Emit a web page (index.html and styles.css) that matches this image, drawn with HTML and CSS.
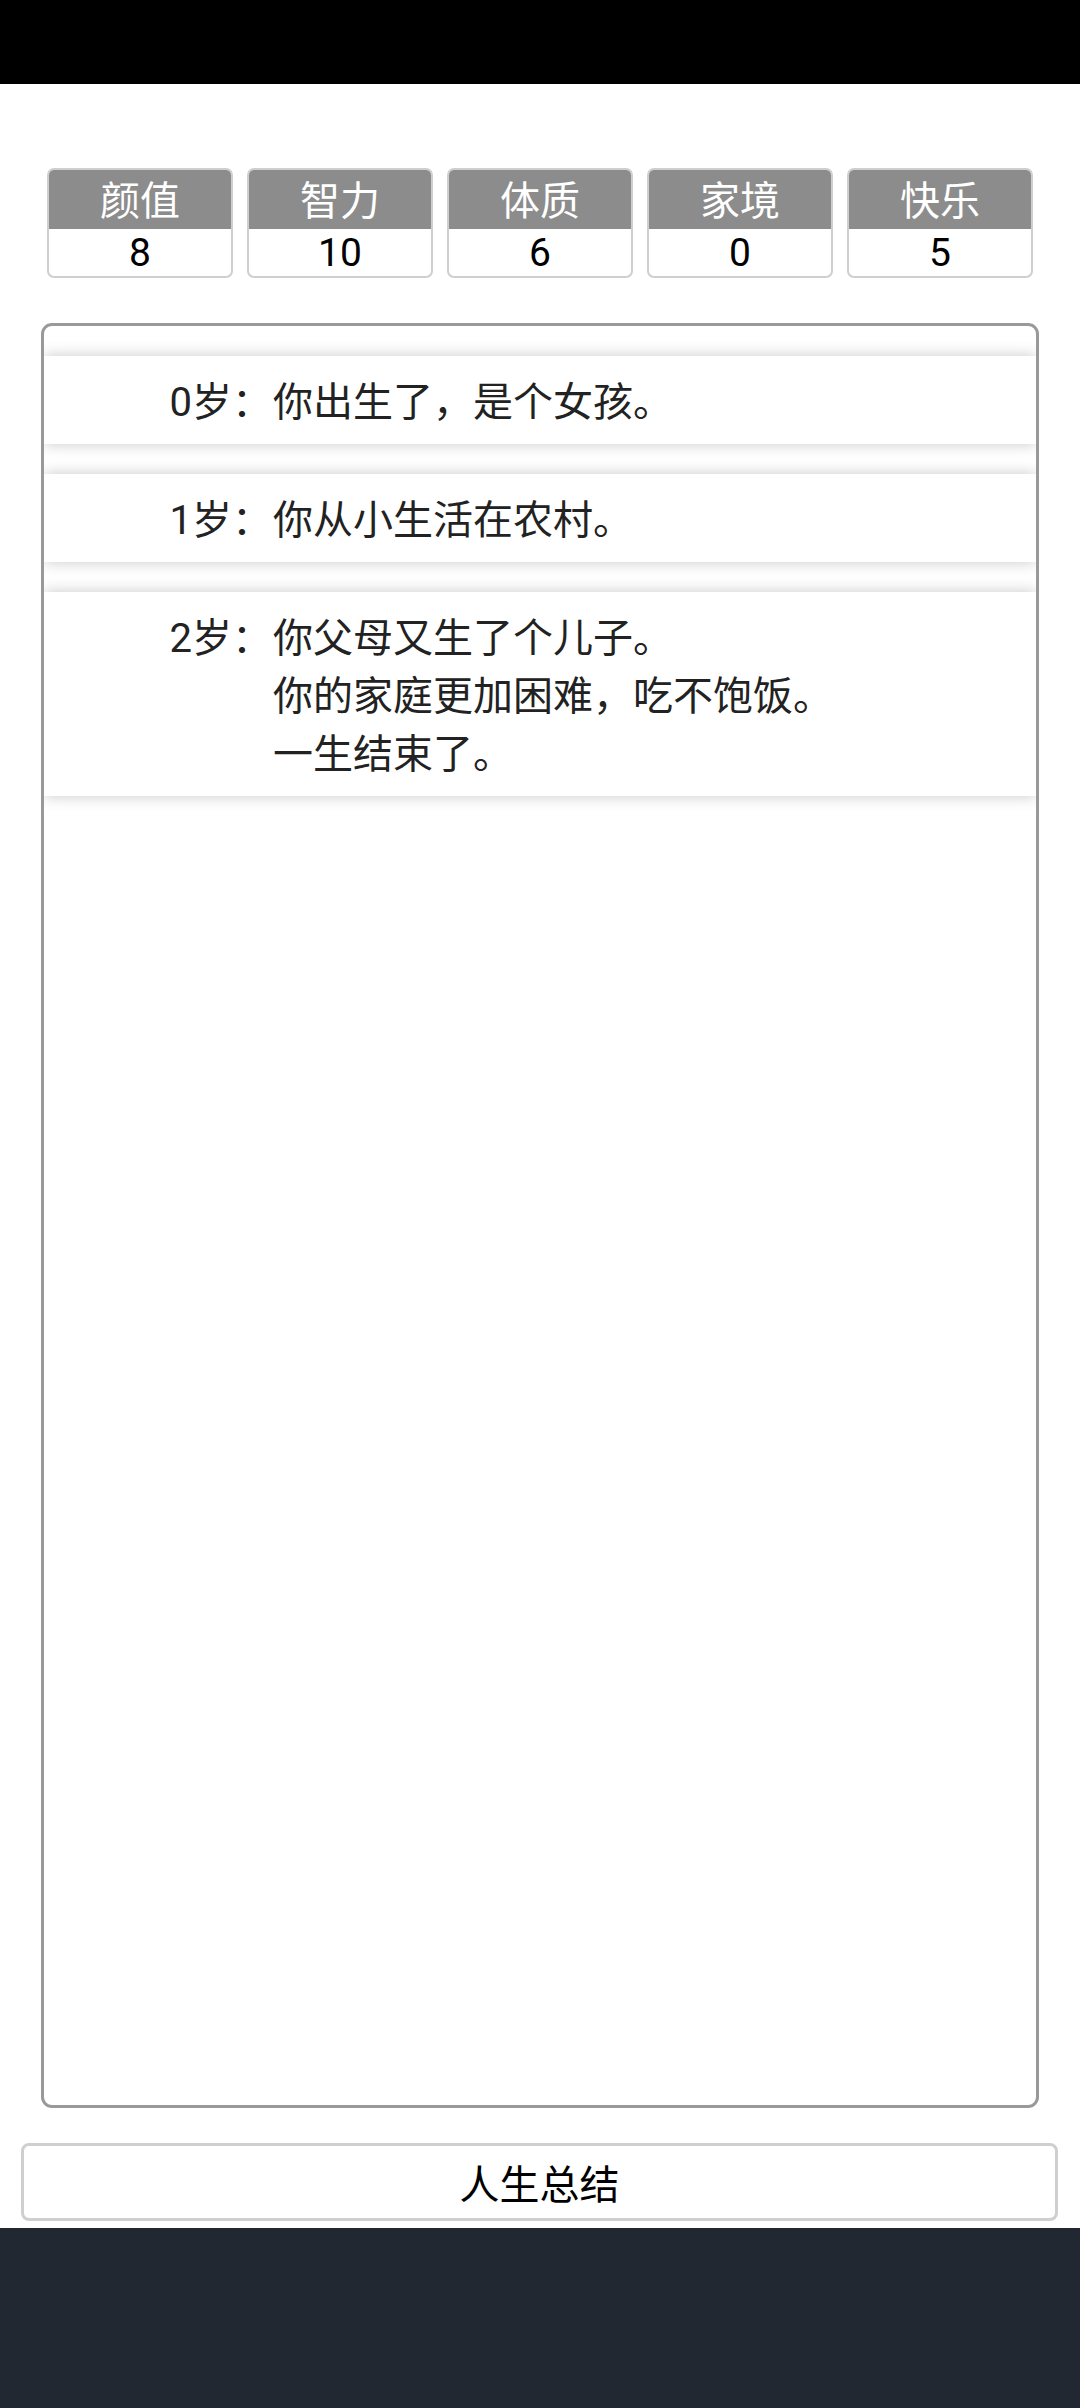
FILE: index.html
```html
<!DOCTYPE html>
<html lang="zh-CN">
<head>
<meta charset="utf-8">
<title>人生重开</title>
<link rel="stylesheet" href="styles.css">
</head>
<body>
<div class="statusbar"></div>
<div class="stats">
  <div class="stat"><div class="stat-name">颜值</div><div class="stat-value">8</div></div>
  <div class="stat"><div class="stat-name">智力</div><div class="stat-value">10</div></div>
  <div class="stat"><div class="stat-name">体质</div><div class="stat-value">6</div></div>
  <div class="stat"><div class="stat-name">家境</div><div class="stat-value">0</div></div>
  <div class="stat"><div class="stat-name">快乐</div><div class="stat-value">5</div></div>
</div>
<div class="panel">
  <ul class="events">
    <li class="event"><span class="age">0岁：</span><span class="text">你出生了，是个女孩。</span></li>
    <li class="event"><span class="age">1岁：</span><span class="text">你从小生活在农村。</span></li>
    <li class="event"><span class="age">2岁：</span><span class="text">你父母又生了个儿子。<br>你的家庭更加困难，吃不饱饭。<br>一生结束了。</span></li>
  </ul>
</div>
<button class="summary">人生总结</button>
<div class="navbar"></div>
</body>
</html>
```
FILE: styles.css
```css
* { box-sizing: border-box; }
html, body {
  margin: 0;
  padding: 0;
  width: 1080px;
  height: 2408px;
  background: #fff;
  font-family: Roboto, "Noto Sans CJK SC", sans-serif;
  overflow: hidden;
}
body {
  display: flex;
  flex-direction: column;
}
.statusbar {
  height: 84px;
  background: #000;
  flex: none;
}
.stats {
  margin: 84px 47px 0 47px;
  display: grid;
  grid-template-columns: repeat(5, 1fr);
  column-gap: 14px;
  flex: none;
}
.stat {
  height: 110px;
  border: 2px solid #cfcfcf;
  border-radius: 7px;
  overflow: hidden;
  display: flex;
  flex-direction: column;
  text-align: center;
}
.stat-name {
  height: 59px;
  padding-top: 4px;
  background: #8c8c8c;
  color: #fff;
  font-size: 40px;
  line-height: 55px;
}
.stat-value {
  flex: 1;
  padding-top: 1px;
  color: #000;
  font-size: 39px;
  line-height: 46px;
}
.panel {
  margin: 45px 41px 0 41px;
  height: 1785px;
  border: 3px solid #999;
  border-radius: 11px;
  overflow: hidden;
  flex: none;
  padding-top: 30px;
}
.events {
  list-style: none;
  margin: 0;
  padding: 0;
  display: flex;
  flex-direction: column;
  gap: 30px;
}
.event {
  display: flex;
  background: #fff;
  box-shadow: 0 0 14px rgba(0, 0, 0, 0.22);
  padding: 18px 0 12px 0;
  font-size: 40px;
  line-height: 58px;
  color: #222;
}
.age {
  width: 228px;
  flex: none;
  text-align: right;
  margin-right: 1px;
}
.text {
  flex: 1;
}
.summary {
  margin: 35px 22px 0 21px;
  height: 78px;
  border: 3px solid #cfcfcf;
  border-radius: 8px;
  background: #fff;
  color: #000;
  font-family: Roboto, "Noto Sans CJK SC", sans-serif;
  font-size: 40px;
  padding: 0;
  flex: none;
}
.navbar {
  margin-top: 7px;
  flex: 1;
  background: #222831;
}
```
